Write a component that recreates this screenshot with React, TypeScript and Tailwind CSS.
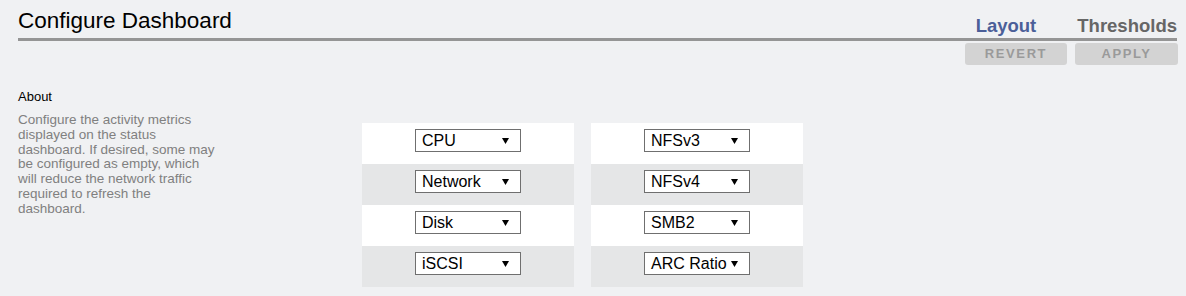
import React from "react";

const Arrow = () => (
  <svg width="7" height="6" viewBox="0 0 7 6" className="shrink-0">
    <polygon points="0,0 7,0 3.5,6" fill="#000" />
  </svg>
);

const Select = ({ label }: { label: string }) => (
  <div className="flex h-[23px] w-[106px] items-center justify-between border border-[#6f6f6f] bg-white pl-[6px] pr-[11px] text-[16px] leading-none text-black">
    <span>{label}</span>
    <Arrow />
  </div>
);

const Table = ({ items }: { items: string[] }) => (
  <div className="flex w-[212px] flex-col">
    {items.map((it, i) => (
      <div
        key={it}
        className={`flex h-[41px] justify-center pt-[6px] ${i % 2 === 0 ? "bg-white" : "bg-[#e5e6e7]"}`}
      >
        <Select label={it} />
      </div>
    ))}
  </div>
);

const lines = [
  "Configure the activity metrics",
  "displayed on the status",
  "dashboard. If desired, some may",
  "be configured as empty, which",
  "will reduce the network traffic",
  "required to refresh the",
  "dashboard.",
];

export default function App() {
  return (
    <div
      className="h-[296px] w-[1186px] overflow-hidden bg-[#f0f1f3] pl-[18px] pr-[9px]"
      style={{ fontFamily: '"Liberation Sans", Arial, sans-serif' }}
    >
      <div className="flex h-[38px] items-end justify-between">
        <div className="pb-[6px] text-[22.5px] leading-none text-black">Configure Dashboard</div>
        <div className="flex gap-[41px] pb-[3px] text-[18.5px] font-bold leading-none">
          <span className="text-[#4b5f99]">Layout</span>
          <span className="text-[#666666]">Thresholds</span>
        </div>
      </div>
      <div className="h-[3px] bg-[#959595]" />
      <div className="mt-[2px] flex justify-end gap-[8px]">
        <div className="flex h-[22px] w-[102px] items-center justify-center rounded-[3px] bg-[#d3d3d3] text-[13px] font-bold tracking-[1.6px] text-[#9a9a9a]">
          REVERT
        </div>
        <div className="-mr-px flex h-[22px] w-[103px] items-center justify-center rounded-[3px] bg-[#d3d3d3] text-[13px] font-bold tracking-[1.6px] text-[#9a9a9a]">
          APPLY
        </div>
      </div>
      <div className="mt-[24px] flex">
        <div className="w-[344px]">
          <div className="text-[13px] leading-[15px] text-black">About</div>
          <div className="mt-[9px] text-[13.5px] leading-[14.8px] text-[#808080]">
            {lines.map((l) => (
              <div key={l}>{l}</div>
            ))}
          </div>
        </div>
        <div className="mt-[34px] flex gap-[17px]">
          <Table items={["CPU", "Network", "Disk", "iSCSI"]} />
          <Table items={["NFSv3", "NFSv4", "SMB2", "ARC Ratio"]} />
        </div>
      </div>
    </div>
  );
}
